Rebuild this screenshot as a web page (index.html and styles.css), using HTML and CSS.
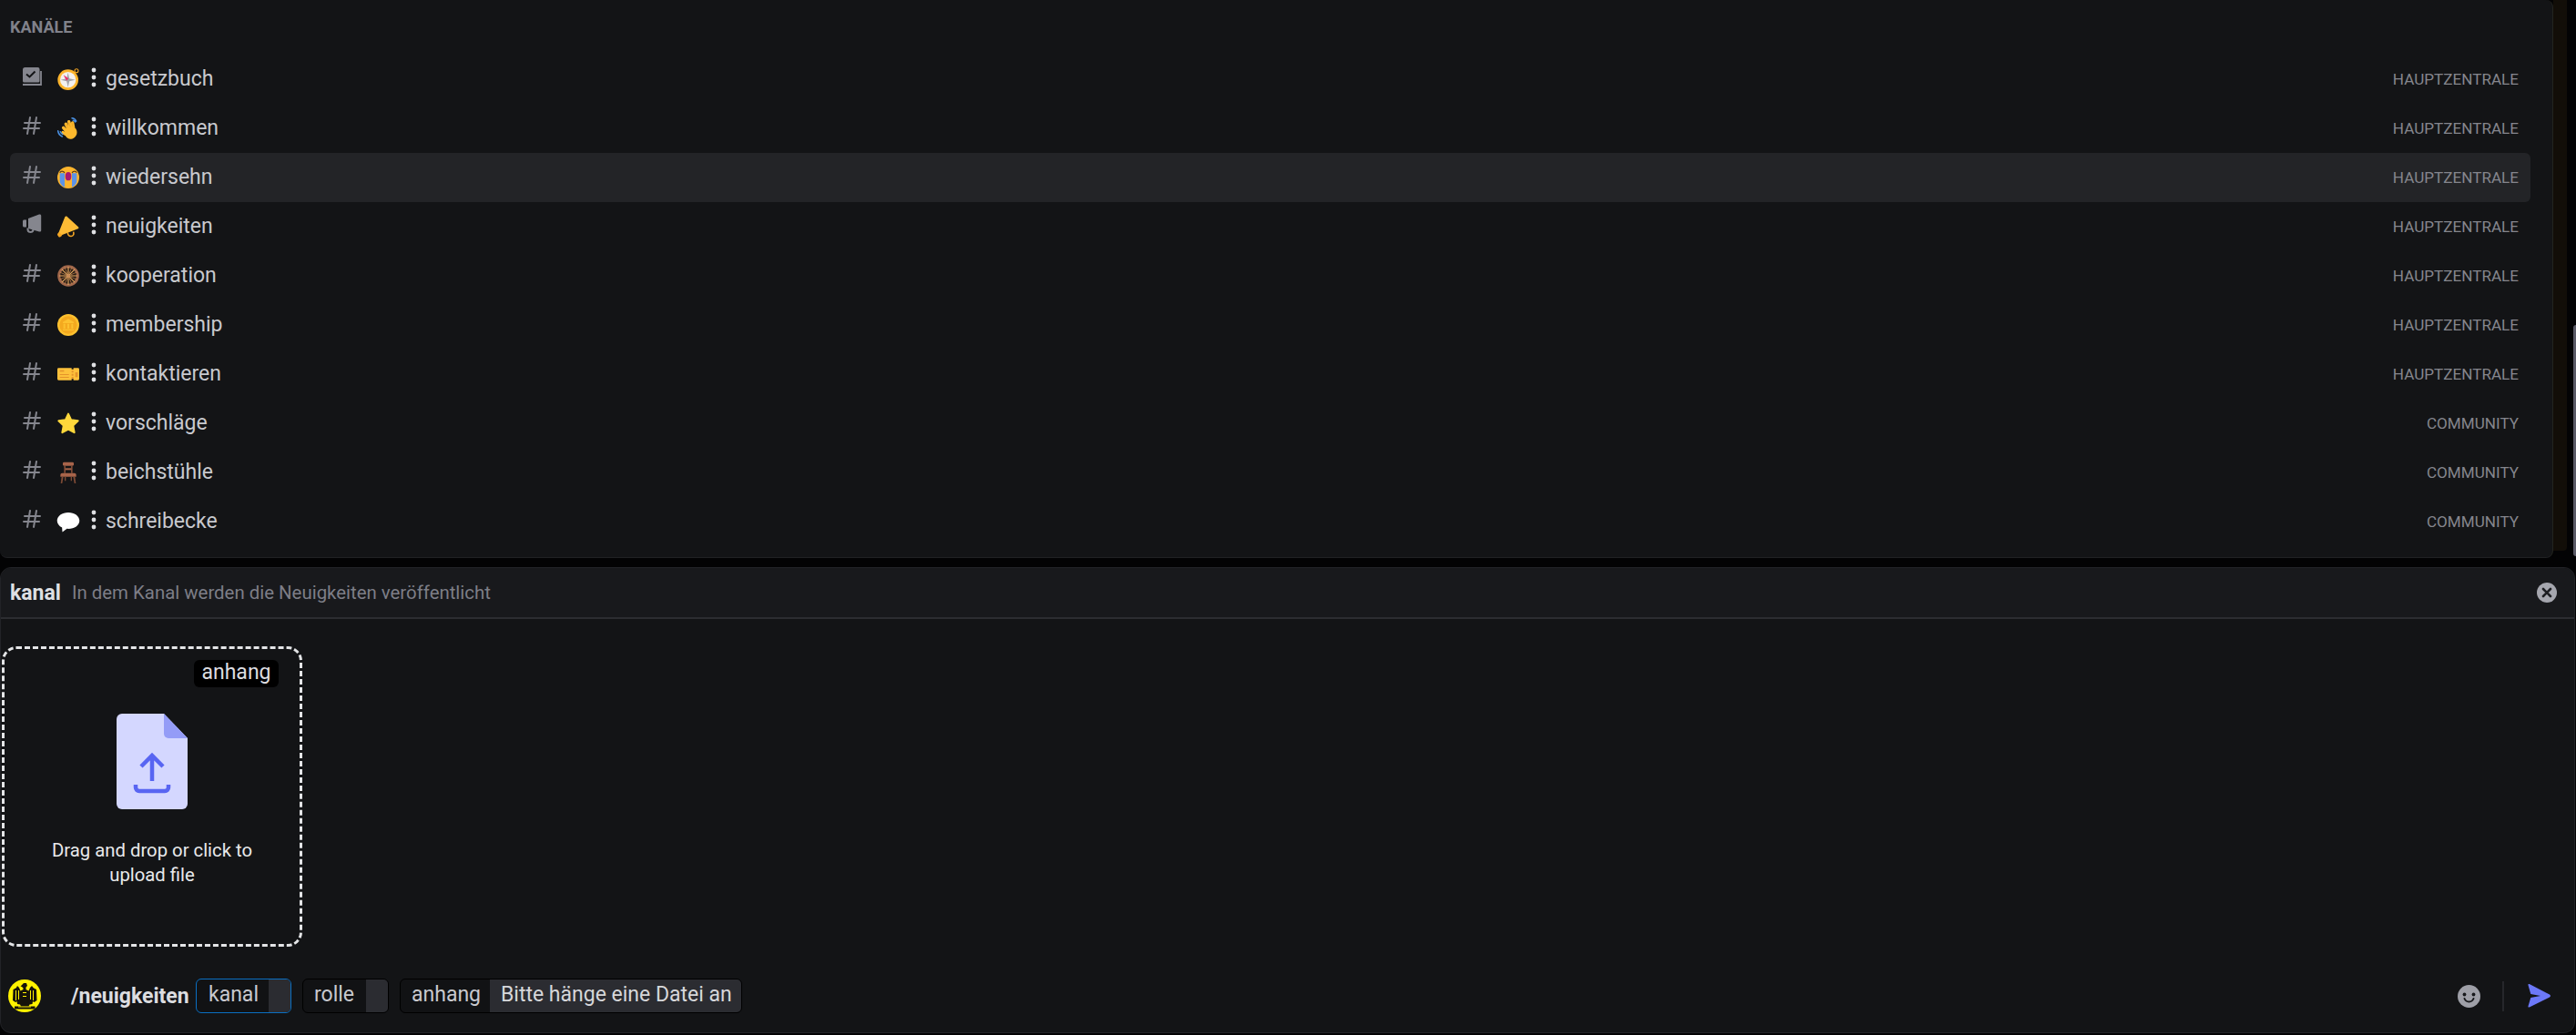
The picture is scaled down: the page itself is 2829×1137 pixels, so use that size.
FILE: index.html
```html
<!DOCTYPE html>
<html lang="de">
<head>
<meta charset="utf-8">
<title>Kanäle</title>
<link rel="stylesheet" href="styles.css">
</head>
<body>
<svg class="defs" width="0" height="0" aria-hidden="true">
  <symbol id="hash" viewBox="0 0 24 24"><path fill="currentColor" fill-rule="evenodd" d="M10.99 3.16A1 1 0 1 0 9 2.84L8.15 8H4a1 1 0 0 0 0 2h3.82l-.67 4H3a1 1 0 1 0 0 2h3.82l-.8 4.84a1 1 0 0 0 1.97.32L8.85 16h4.97l-.8 4.84a1 1 0 0 0 1.97.32l.86-5.16H20a1 1 0 1 0 0-2h-3.82l.67-4H21a1 1 0 1 0 0-2h-3.82l.8-4.84a1 1 0 1 0-1.97-.32L15.15 8h-4.97l.8-4.84ZM14.15 14l.67-4H9.85l-.67 4h4.97Z"/></symbol>
  <symbol id="dots" viewBox="0 0 6 22"><circle cx="3" cy="3" r="2.400" fill="#dfe0e3"/><circle cx="3" cy="11" r="2.400" fill="#dfe0e3"/><circle cx="3" cy="19" r="2.400" fill="#dfe0e3"/></symbol>
</svg>
<div class="top">
  <section class="panel">
    <h2 class="heading">KANÄLE</h2>
    <ul class="list">
      <li class="row">
        <svg class="ico" viewBox="0 0 24 24"><path fill="currentColor" d="M4.500 2h14A2 2 0 0 1 20.500 4v13a1.500 1.500 0 0 1-1.500 1.500H3.500A1.500 1.500 0 0 1 2 17V4.500A2.500 2.500 0 0 1 4.500 2Z"/><path fill="none" stroke="#131416" stroke-width="2" d="M6 9.500l3.500 3 6-6"/><path fill="none" stroke="currentColor" stroke-width="1.800" d="M2 21h20V6"/></svg>
        <svg class="emo" viewBox="0 0 36 36"><circle cx="31.500" cy="4" r="3" fill="none" stroke="#f4a623" stroke-width="1.600"/><circle cx="17.500" cy="19" r="17" fill="#fdb52d"/><circle cx="17.500" cy="19" r="13" fill="#f3f1f0"/><path fill="#a3a4a8" d="M17.500 7l2.200 9.800 9.800 2.200-9.800 2.200-2.200 9.800-2.200-9.800-9.800-2.200 9.800-2.200z"/><path fill="#e8336e" d="M10 11l8.500 6-3.500 3.500z"/></svg>
        <svg class="sep"><use href="#dots"/></svg>
        <span class="name">gesetzbuch</span><span class="cat">HAUPTZENTRALE</span>
      </li>
      <li class="row">
        <svg class="ico"><use href="#hash"/></svg>
        <svg class="emo" viewBox="0 0 36 36"><g fill="none" stroke="#fdb92d" stroke-width="5.200" stroke-linecap="round"><path d="M16 24L10 17M19 21L14 11M23 20L19 7M27 20L25 9"/><path d="M17 29L9 25"/></g><path fill="#fdb92d" d="M14 18h16c3 4 3 9 .5 12.500C28 34 25 36 21.500 35.500 16 35 11.500 30 12 24z"/><path fill="none" stroke="#e39a1f" stroke-width=".9" d="M17 17l-3-6M21.500 16L18.500 8M26 16l-2-7"/><path fill="none" stroke="#4a90e2" stroke-width="2.300" stroke-linecap="round" d="M1 22c.5 4.500 3 7.500 7 9.500M5 23.500c.5 1.800 1.500 3 3.500 4M24 1.200c3 .2 5.500 2 7 5M26 5c1.500.3 2.500 1 3.500 2.500"/></svg>
        <svg class="sep"><use href="#dots"/></svg>
        <span class="name">willkommen</span><span class="cat">HAUPTZENTRALE</span>
      </li>
      <li class="row on">
        <svg class="ico"><use href="#hash"/></svg>
        <svg class="emo" viewBox="0 0 36 36"><circle cx="18" cy="18" r="18" fill="#fdb52d"/><path fill="#5c92e6" d="M4 11h8v23c-4-2-8-6-8-10zM24 11h8v13c0 4-4 8-8 10z"/><ellipse cx="18" cy="16" rx="5" ry="7" fill="#a8186e"/><path fill="none" stroke="#5b3a12" stroke-width="2" d="M4 10c2-3 5-3 8 0M24 10c3-3 6-3 8 0"/></svg>
        <svg class="sep"><use href="#dots"/></svg>
        <span class="name">wiedersehn</span><span class="cat">HAUPTZENTRALE</span>
      </li>
      <li class="row">
        <svg class="ico" viewBox="0 0 24 24"><path fill="currentColor" d="M20 1.500c1.200-.4 2.200.3 2.200 1.500v16c0 1.200-1 1.900-2.200 1.500L8 17V6zM6 7.500v8H3.500C2.700 15.500 2 14.800 2 14v-5C2 8.200 2.700 7.500 3.500 7.500z"/><path fill="none" stroke="currentColor" stroke-width="2" d="M7.500 16.500V18a3 3 0 0 0 6 0v-.5"/></svg>
        <svg class="emo" viewBox="0 0 36 36"><path fill="#fdbb35" d="M12.500 2c1-1.500 2.500-1.500 3.500-.5l18.500 17c1 1 .7 2.500-.5 3L7 32 2 28z"/><path fill="#f4a623" d="M1 29c-.8.800-1.300 1.800-.8 2.800l2 3c.6.800 1.800.8 2.800.2l3-2.500-5-5.500z"/><path fill="none" stroke="#f4a623" stroke-width="2.400" d="M17 27.500c0 4 2 6.500 6 6.200 3.500-.3 4.500-3 3.500-7.200"/></svg>
        <svg class="sep"><use href="#dots"/></svg>
        <span class="name">neuigkeiten</span><span class="cat">HAUPTZENTRALE</span>
      </li>
      <li class="row">
        <svg class="ico"><use href="#hash"/></svg>
        <svg class="emo" viewBox="0 0 36 36"><circle cx="18" cy="18" r="15.500" fill="#241a14" stroke="#a0674b" stroke-width="4.500"/><path stroke="#e5a860" stroke-width="1.700" d="M18 3v30M3 18h30M7.400 7.400l21.200 21.200M28.600 7.400L7.400 28.600"/><path stroke="#c98b50" stroke-width="1.100" d="M12 4l12 28M24 4L12 32M4 12l28 12M32 12L4 24"/><circle cx="18" cy="18" r="2.600" fill="#c68a5a"/></svg>
        <svg class="sep"><use href="#dots"/></svg>
        <span class="name">kooperation</span><span class="cat">HAUPTZENTRALE</span>
      </li>
      <li class="row">
        <svg class="ico"><use href="#hash"/></svg>
        <svg class="emo" viewBox="0 0 36 36"><circle cx="18" cy="18" r="18" fill="#fdc12f"/><circle cx="18" cy="18" r="14.500" fill="#f4a91f"/><path fill="#fdc12f" d="M18 8l9 5v2H9v-2zM10 16h3v8h-3zM16.500 16h3v8h-3zM23 16h3v8h-3zM9 25h18v2H9z"/></svg>
        <svg class="sep"><use href="#dots"/></svg>
        <span class="name">membership</span><span class="cat">HAUPTZENTRALE</span>
      </li>
      <li class="row">
        <svg class="ico"><use href="#hash"/></svg>
        <svg class="emo" viewBox="0 0 36 36"><path fill="#fdc13b" d="M2 8h21.500v2h3V8H34a2 2 0 0 1 2 2v16a2 2 0 0 1-2 2h-7.500v-2h-3v2H2a2 2 0 0 1-2-2V10a2 2 0 0 1 2-2z"/><path fill="#e4932a" d="M4 11.500h7v2.500H4zM4 18h15v1.600H4zM4 22.500h15v1.600H4zM23.500 12.500h3v3h-3zM23.500 17.500h3v3h-3zM23.500 22.500h3v3h-3zM29.500 15h4v8h-4z"/></svg>
        <svg class="sep"><use href="#dots"/></svg>
        <span class="name">kontaktieren</span><span class="cat">HAUPTZENTRALE</span>
      </li>
      <li class="row">
        <svg class="ico"><use href="#hash"/></svg>
        <svg class="emo" viewBox="0 0 36 36"><path fill="#ffd83b" stroke="#ffd83b" stroke-width="3" stroke-linejoin="round" d="M18 2.500l4.800 10L34 14l-8.200 7.800 2.200 11.400L18 27.800 8 33.200l2.200-11.400L2 14l11.200-1.500z"/></svg>
        <svg class="sep"><use href="#dots"/></svg>
        <span class="name">vorschläge</span><span class="cat">COMMUNITY</span>
      </li>
      <li class="row">
        <svg class="ico"><use href="#hash"/></svg>
        <svg class="emo" viewBox="0 0 36 36"><rect x="9" y="1" width="18" height="6" rx="2" fill="#a8644a"/><path fill="#7c4a35" d="M11 7h2.500v12H11zM22.500 7H25v12h-2.500z"/><rect x="13" y="11" width="10" height="3" fill="#a8644a"/><path fill="#a8644a" d="M8 19h20a3 3 0 0 1 3 3v3H5v-3a3 3 0 0 1 3-3z"/><path fill="#7c4a35" d="M7 25h3l-2 11H5.500zM26 25h3l1.500 11H28zM12 25h2v7h-2zM22 25h2v7h-2z"/></svg>
        <svg class="sep"><use href="#dots"/></svg>
        <span class="name">beichstühle</span><span class="cat">COMMUNITY</span>
      </li>
      <li class="row">
        <svg class="ico"><use href="#hash"/></svg>
        <svg class="emo wide" viewBox="0 0 36 36"><path fill="#fff" d="M18 4C8.600 4 1 9.500 1 16.500c0 4.400 3 8.200 7.500 10.500L9 34l7-5.100c.700.100 1.300.100 2 .100 9.400 0 17-5.500 17-12.500S27.400 4 18 4z"/></svg>
        <svg class="sep"><use href="#dots"/></svg>
        <span class="name">schreibecke</span><span class="cat">COMMUNITY</span>
      </li>
    </ul>
  </section>
  <div class="strip"></div>
  <div class="rail"><div class="thumb"></div></div>
</div>
<section class="cmd">
  <header class="head">
    <strong class="opt">kanal</strong>
    <span class="desc">In dem Kanal werden die Neuigkeiten veröffentlicht</span>
    <svg class="close" viewBox="0 0 22 22"><circle cx="11" cy="11" r="11" fill="#a5a6ae"/><path stroke="#1d1e22" stroke-width="2.600" stroke-linecap="round" d="M7 7l8 8M15 7l-8 8"/></svg>
  </header>
  <div class="body">
    <div class="drop">
      <span class="tag">anhang</span>
      <svg class="file" viewBox="0 0 78 105"><path fill="#d4d7ff" d="M6 0h46l26 27v72a6 6 0 0 1-6 6H6a6 6 0 0 1-6-6V6a6 6 0 0 1 6-6z"/><path fill="#949cf7" d="M52 0l26 27H57a5 5 0 0 1-5-5z"/><path fill="none" stroke="#5865f2" stroke-width="4.500" d="M39 74V46M27 58l12-12 12 12"/><path fill="none" stroke="#5865f2" stroke-width="4.500" d="M21 78v3a4 4 0 0 0 4 4h28a4 4 0 0 0 4-4v-3"/></svg>
      <p class="hint">Drag and drop or click to upload file</p>
    </div>
  </div>
  <footer class="bar">
    <svg class="avatar" viewBox="0 0 36 36"><circle cx="18" cy="18" r="18" fill="#fff200"/><path fill="#16130a" d="M17 4h3l1 3-1.500 1.500V11l3 1.500L24 9l2-2 1.500 2 1.500 1 2 1 .5 12-3 2-1.500-1-.5 3-3 .5-1 2h7v3H7v-3h7l-1-2-3-.5-.5-3-1.500 1-3-2 .5-12 2-1 1.500-1L10 7l2 2 1.500 3.500 3-1.500V9.500L15 8 13.500 7.500z"/><path fill="#fff200" d="M8 12h1v11H8zM11 12h1v10h-1zM24 12h1v10h-1zM27 12h1v11h-1zM16 14h4v1h-4zM16 18h4v1h-4zM11 29.500h14v1H11z"/></svg>
    <span class="cmdname">/neuigkeiten</span>
    <div class="chip focus"><span class="key kk">kanal</span><span class="val blank"></span></div>
    <div class="chip"><span class="key kr">rolle</span><span class="val blank"></span></div>
    <div class="chip"><span class="key ka">anhang</span><span class="val">Bitte hänge eine Datei an</span></div>
    <div class="tools">
      <svg class="smile" viewBox="0 0 25 25"><circle cx="12.500" cy="12.500" r="12.500" fill="#9e9fa7"/><circle cx="7.500" cy="10.500" r="1.900" fill="#17181b"/><circle cx="17.500" cy="10.500" r="1.900" fill="#17181b"/><path fill="none" stroke="#17181b" stroke-width="2" stroke-linecap="round" d="M7.500 15c1 2.500 3 3.500 5 3.500s4-1 5-3.500"/></svg>
      <span class="vr"></span>
      <svg class="send" viewBox="0 0 26 26"><path fill="#6c78f8" d="M1.500 1.200c-.3-.9.500-1.500 1.300-1.200L25 11.500c1.300.7 1.300 2.300 0 3L2.800 25.500c-.8.300-1.600-.3-1.300-1.200L4.300 15 15 13 4.300 11z"/></svg>
    </div>
  </footer>
</section>
</body>
</html>
```
FILE: styles.css
```css
* { box-sizing: border-box; }
html, body { margin: 0; height: 100%; }
body {
  background: #030304;
  color: #dcdde0;
  font-family: Roboto, "Noto Sans", sans-serif;
  overflow: hidden;
  width: 2829px;
  height: 1137px;
}
.defs { display: block; height: 0; }
.top { display: flex; height: 613px; }
.panel {
  width: 2804px;
  height: 613px;
  background: #131416;
  border-right: 1px solid #23241f;
  border-bottom: 1px solid #202124;
  border-radius: 0 8px 8px 8px;
  padding-top: 20px;
  flex: none;
}
.heading {
  margin: 0 0 0 11px;
  height: 20px;
  font-size: 18px;
  line-height: 20px;
  font-weight: 700;
  color: #80818a;
}
.list { list-style: none; margin: 20px 0 0 11px; padding: 0; width: 2768px; }
.row {
  display: flex;
  align-items: center;
  height: 54px;
  padding: 0 13px 0 12px;
  border-radius: 6px;
}
.row.on { background: #232427; }
.ico { width: 24px; height: 24px; color: #85868e; flex: none; transform: translateY(-3px); }
.emo { width: 24px; height: 24px; margin-left: 16px; flex: none; }
.emo.wide { width: 26px; height: 26px; margin-left: 15px; margin-right: -1px; }
.sep { width: 6px; height: 22px; margin-left: 13px; flex: none; transform: translateY(-2px); }
.name { margin-left: 10px; font-size: 23px; color: #c8c9ce; line-height: 30px; }
.cat { margin-left: auto; font-size: 17.100px; color: #85868d; }
.strip { width: 15px; height: 605px; background: #120e08; flex: none; border-radius: 0 0 4px 0; }
.rail { width: 10px; flex: none; position: relative; }
.thumb { position: absolute; left: 7px; top: 357px; width: 3px; height: 254px; background: #5a5a66; border-radius: 3px 0 0 3px; }
.cmd {
  margin-top: 10px;
  width: 2828px;
  height: 512px;
  background: #131416;
  border: 1px solid #222327;
  border-radius: 12px;
  display: flex;
  flex-direction: column;
  overflow: hidden;
}
.head {
  height: 56px;
  background: #18191c;
  border-bottom: 2px solid #2c2d31;
  display: flex;
  align-items: center;
  padding: 0 19px 0 10px;
  flex: none;
}
.opt { font-size: 23px; color: #dfe0e3; font-weight: 700; }
.desc { margin-left: 12px; font-size: 20.400px; color: #7d7e87; }
.close { width: 22px; height: 22px; margin-left: auto; }
.body { flex: 1; padding: 30px 0 0 1px; }
.drop {
  width: 330px;
  height: 330px;
  border: 3px dashed #e4e5e7;
  border-radius: 16px;
  position: relative;
  display: flex;
  flex-direction: column;
  align-items: center;
  padding-top: 71px;
}
.tag {
  position: absolute;
  top: 12px;
  right: 23px;
  width: 93px;
  height: 30px;
  background: #000;
  border-radius: 6px;
  font-size: 23px;
  line-height: 28px;
  text-align: center;
  color: #dcdde0;
}
.file { width: 78px; height: 105px; flex: none; }
.hint {
  margin: 32px 0 0;
  width: 250px;
  text-align: center;
  font-size: 20.300px;
  line-height: 27px;
  color: #e8e9eb;
}
.bar {
  height: 76px;
  display: flex;
  align-items: center;
  padding: 0 26px 4px 8px;
  flex: none;
}
.avatar { width: 36px; height: 36px; flex: none; }
.cmdname { margin-left: 33px; font-size: 23px; font-weight: 700; color: #dcdde0; width: 137px; flex: none; }
.chip {
  display: flex;
  align-items: stretch;
  height: 38px;
  margin-right: 12px;
  background: #111214;
  border: 1px solid #000;
  border-radius: 6px;
  overflow: hidden;
  font-size: 23px;
  line-height: 34px;
  color: #c8c9ce;
  flex: none;
}
.chip.focus { border-color: #0a6fc2; }
.key { padding-left: 12px; }
.kk { width: 79px; padding-left: 13px; }
.kr { width: 69px; }
.ka { width: 98px; }
.val { background: #2b2c31; padding: 0 12px; color: #d6d7da; width: 276px; white-space: nowrap; }
.val.blank { padding: 0; width: 24px; }
.tools { margin-left: auto; display: flex; align-items: center; }
.smile { width: 25px; height: 25px; }
.vr { width: 2px; height: 33px; background: #26272b; margin: 0 25px 0 24px; }
.send { width: 26px; height: 26px; }
```
